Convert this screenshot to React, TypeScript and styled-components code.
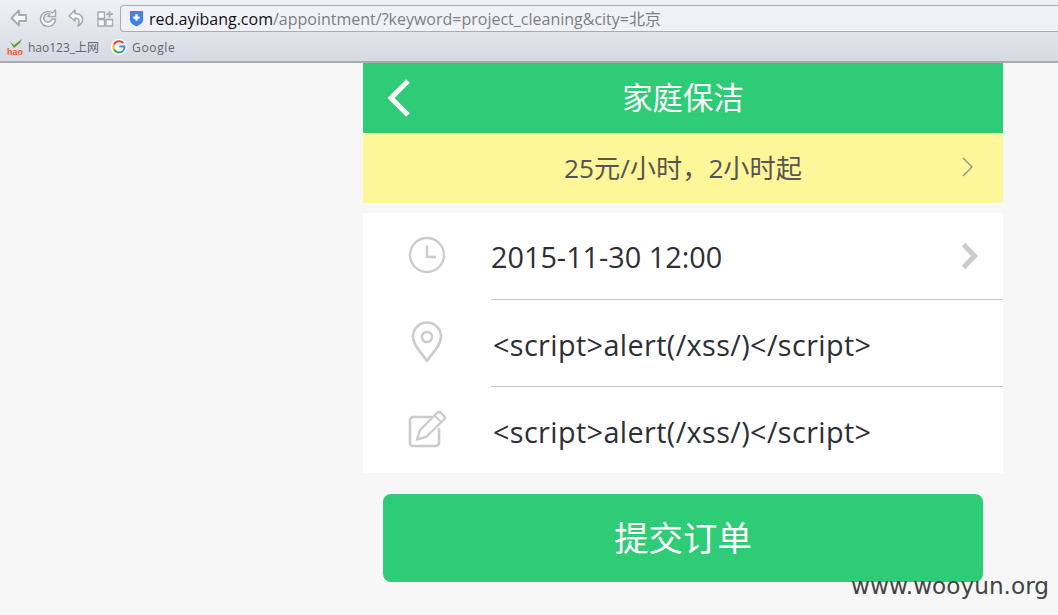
import React from 'react';
import styled, { createGlobalStyle } from 'styled-components';

const GlobalStyle = createGlobalStyle`
  html, body {
    margin: 0;
    padding: 0;
    height: 100%;
    background: #f7f7f7;
    overflow: hidden;
  }
  * {
    box-sizing: border-box;
  }
`;

const FONT = `"Open Sans", "Noto Sans CJK SC", sans-serif`;

const Page = styled.div`
  position: relative;
  width: 1058px;
  height: 615px;
  font-family: ${FONT};
  background: #f7f7f7;
  overflow: hidden;
`;

const Chrome = styled.header`
  height: 63px;
  background: linear-gradient(#f1f2f6, #d6d8e3);
  border-bottom: 2px solid #a9a9b0;
`;

const NavRow = styled.div`
  display: flex;
  align-items: center;
  height: 36px;
  padding-left: 4px;
`;

const NavButton = styled.span`
  display: flex;
  justify-content: center;
  width: 29px;
`;

const AddressBar = styled.div`
  display: flex;
  align-items: center;
  gap: 5px;
  width: 938px;
  height: 27px;
  padding-left: 8px;
  background: #f1f2f7;
  border: 1px solid #a9abb2;
  border-right: none;
  border-radius: 4px 0 0 4px;
  font-size: 16px;
  color: #7d7f84;
  white-space: nowrap;
`;

const Host = styled.span`
  color: #111;
`;

const Bookmarks = styled.div`
  display: flex;
  align-items: center;
  height: 25px;
  padding: 0 0 3px 7px;
  font-size: 12px;
  color: #63656d;
`;

const Bookmark = styled.span<{ $spaced?: boolean }>`
  display: flex;
  align-items: center;
  gap: 5px;
  margin-right: 12px;
  letter-spacing: ${(p) => (p.$spaced ? '0.65px' : 'normal')};
`;

const LogoText = styled.text`
  font-family: "Liberation Sans", sans-serif;
  font-size: 9px;
  font-weight: 700;
  letter-spacing: 0;
  fill: #ef5a1c;
`;

const Column = styled.main`
  width: 640px;
  margin-left: 363px;
`;

const TitleBar = styled.div`
  display: flex;
  align-items: center;
  justify-content: center;
  position: relative;
  height: 70px;
  padding-bottom: 4px;
  background: #2ecc76;
  color: #fff;
  font-size: 30.400px;
`;

const BackIcon = styled.svg`
  position: absolute;
  left: 23px;
  top: 15px;
`;

const Notice = styled.div`
  display: flex;
  align-items: center;
  justify-content: center;
  position: relative;
  height: 70px;
  padding-bottom: 2px;
  background: #fff599;
  color: #555;
  font-size: 26.200px;
`;

const NoticeArrow = styled.svg`
  position: absolute;
  right: 29px;
  top: 24px;
`;

const Form = styled.section`
  margin-top: 10px;
  background: #fff;
`;

const Row = styled.div`
  display: flex;
  height: 87px;

  &:last-child {
    height: 86px;
  }
`;

const IconCell = styled.div`
  display: flex;
  align-items: center;
  justify-content: center;
  width: 128px;
  padding: 0 1px 3px 0;
`;

const Field = styled.div<{ $divider?: boolean; $inset?: number; $spaced?: boolean }>`
  display: flex;
  align-items: center;
  justify-content: space-between;
  flex: 1;
  padding-left: ${(p) => p.$inset ?? 0}px;
  padding-top: ${(p) => (p.$spaced ? 2 : 0)}px;
  border-bottom: ${(p) => (p.$divider ? '1px solid #c8c8c8' : 'none')};
  color: #2e2e36;
  font-size: 28.800px;
  letter-spacing: ${(p) => (p.$spaced ? '0.38px' : 'normal')};
`;

const RowArrow = styled.svg`
  margin-right: 24px;
`;

const Submit = styled.button`
  display: block;
  width: 600px;
  height: 88px;
  margin: 21px 0 0 20px;
  padding: 0 0 4px;
  border: none;
  border-radius: 8px;
  background: #2ecc76;
  color: #fff;
  font-family: ${FONT};
  font-size: 34.400px;
`;

const Watermark = styled.div`
  position: absolute;
  right: 9px;
  top: 570px;
  color: #444;
  font-family: "DejaVu Sans", sans-serif;
  font-size: 23.200px;
  line-height: 32px;
`;

const chromeStroke = { fill: '#fafafa', stroke: '#a8aab0', strokeWidth: 1.4, strokeLinejoin: 'round' as const };

const App: React.FC = () => {
  return (
    <Page>
      <GlobalStyle />
      <Chrome>
        <NavRow>
          <NavButton>
            <svg width="18" height="18" viewBox="0 0 18 18">
              <path d="M9 1.500 L1.500 9 L9 16.500 V12 H16 V6 H9 Z" {...chromeStroke} strokeWidth={1.800} />
            </svg>
          </NavButton>
          <NavButton>
            <svg width="18" height="18" viewBox="0 0 18 18">
              <path d="M13.500 4 A7.500 7.500 0 1 0 16.500 10 H13 A4.200 4.200 0 1 1 11 5.200 L9 7.500 H16.500 V1 Z" {...chromeStroke} strokeWidth={1.500} />
            </svg>
          </NavButton>
          <NavButton>
            <svg width="18" height="18" viewBox="0 0 18 18">
              <path d="M7 1 L1 7 L7 12 V9 C11 9 12 12 10 17 C16 14 17 5 7 4.500 Z" {...chromeStroke} strokeWidth={1.600} />
            </svg>
          </NavButton>
          <NavButton>
            <svg width="17" height="17" viewBox="0 0 17 17">
              <rect x="1" y="2" width="6.500" height="6.500" {...chromeStroke} />
              <rect x="1" y="9.500" width="6.500" height="6.500" {...chromeStroke} />
              <rect x="9" y="9.500" width="6.500" height="6.500" {...chromeStroke} />
              <path d="M12.500 1 V7.500 M9.200 4.200 H15.800" stroke="#a8aab0" strokeWidth="1.800" />
            </svg>
          </NavButton>
          <AddressBar>
            <svg width="15" height="17" viewBox="0 0 16 18">
              <path d="M1 1 H15 V10 C15 14 11 16 8 17.500 C5 16 1 14 1 10 Z" fill="#3d83ea" />
              <path d="M8 4.500 V11.500 M4.500 8 H11.500" stroke="#fff" strokeWidth="2.400" />
            </svg>
            <span>
              <Host>red.ayibang.com</Host>/appointment/?keyword=project_cleaning&amp;city=北京
            </span>
          </AddressBar>
        </NavRow>
        <Bookmarks>
          <Bookmark>
            <svg width="16" height="16" viewBox="0 0 16 16">
              <path d="M3 3 L7 6 L15 0 L13 4 L7 9 Z" fill="#5aa52a" />
              <LogoText x="0" y="15.500">hao</LogoText>
            </svg>
            hao123_上网
          </Bookmark>
          <Bookmark $spaced>
            <svg width="16" height="16" viewBox="0 0 16 16">
              <circle cx="8" cy="8" r="8" fill="#fff" />
              <path d="M12.400 4.200 A5.600 5.600 0 0 0 3 5.500" fill="none" stroke="#ea4335" strokeWidth="2" />
              <path d="M3 5.500 A5.600 5.600 0 0 0 3 10.500" fill="none" stroke="#fbbc05" strokeWidth="2" />
              <path d="M3 10.500 A5.600 5.600 0 0 0 11.800 12" fill="none" stroke="#34a853" strokeWidth="2" />
              <path d="M11.800 12 A5.600 5.600 0 0 0 13.500 7.500 H8.200" fill="none" stroke="#4285f4" strokeWidth="2" />
            </svg>
            Google
          </Bookmark>
        </Bookmarks>
      </Chrome>
      <Column>
        <TitleBar>
          <BackIcon width="26" height="40" viewBox="0 0 26 40">
            <path d="M22 3 L5 20 L22 37" fill="none" stroke="#fff" strokeWidth="5" />
          </BackIcon>
          家庭保洁
        </TitleBar>
        <Notice>
          25元/小时，2小时起
          <NoticeArrow width="12" height="20" viewBox="0 0 12 20">
            <path d="M1 1 L10 10 L1 19" fill="none" stroke="#8f8f80" strokeWidth="1.300" />
          </NoticeArrow>
        </Notice>
        <Form>
          <Row>
            <IconCell>
              <svg width="38" height="38" viewBox="0 0 38 38">
                <circle cx="19" cy="19" r="17" fill="none" stroke="#cccccc" strokeWidth="2.400" />
                <path d="M19 9.500 V21 H28" fill="none" stroke="#cccccc" strokeWidth="2.400" />
              </svg>
            </IconCell>
            <Field $divider>
              2015-11-30 12:00
              <RowArrow width="18" height="28" viewBox="0 0 18 28">
                <path d="M2.500 2.500 L13.500 14 L2.500 25.500" fill="none" stroke="#cccccc" strokeWidth="5" />
              </RowArrow>
            </Field>
          </Row>
          <Row>
            <IconCell>
              <svg width="32" height="42" viewBox="0 0 32 42">
                <path d="M16 40 C11 32 2 25 2 15.500 A14 14 0 0 1 30 15.500 C30 25 21 32 16 40 Z" fill="none" stroke="#cccccc" strokeWidth="2.600" strokeLinejoin="round" />
                <circle cx="16" cy="16" r="5" fill="none" stroke="#cccccc" strokeWidth="2.600" />
              </svg>
            </IconCell>
            <Field $divider $inset={2} $spaced>{'<script>alert(/xss/)</script>'}</Field>
          </Row>
          <Row>
            <IconCell>
              <svg width="38" height="38" viewBox="0 0 38 38">
                <path d="M24 7 H5 A3 3 0 0 0 2 10 V33 A3 3 0 0 0 5 36 H28 A3 3 0 0 0 31 33 V18" fill="none" stroke="#cccccc" strokeWidth="2.600" />
                <path d="M12 20 L29 3 A2.500 2.500 0 0 1 33 3 L36 6 A2.500 2.500 0 0 1 36 9.500 L18 27 L9 29.500 Z" fill="none" stroke="#cccccc" strokeWidth="2.400" strokeLinejoin="round" />
                <path d="M27 6 L33 12" stroke="#cccccc" strokeWidth="2" />
              </svg>
            </IconCell>
            <Field $inset={2} $spaced>{'<script>alert(/xss/)</script>'}</Field>
          </Row>
        </Form>
        <Submit>提交订单</Submit>
      </Column>
      <Watermark>www.wooyun.org</Watermark>
    </Page>
  );
};

export default App;
